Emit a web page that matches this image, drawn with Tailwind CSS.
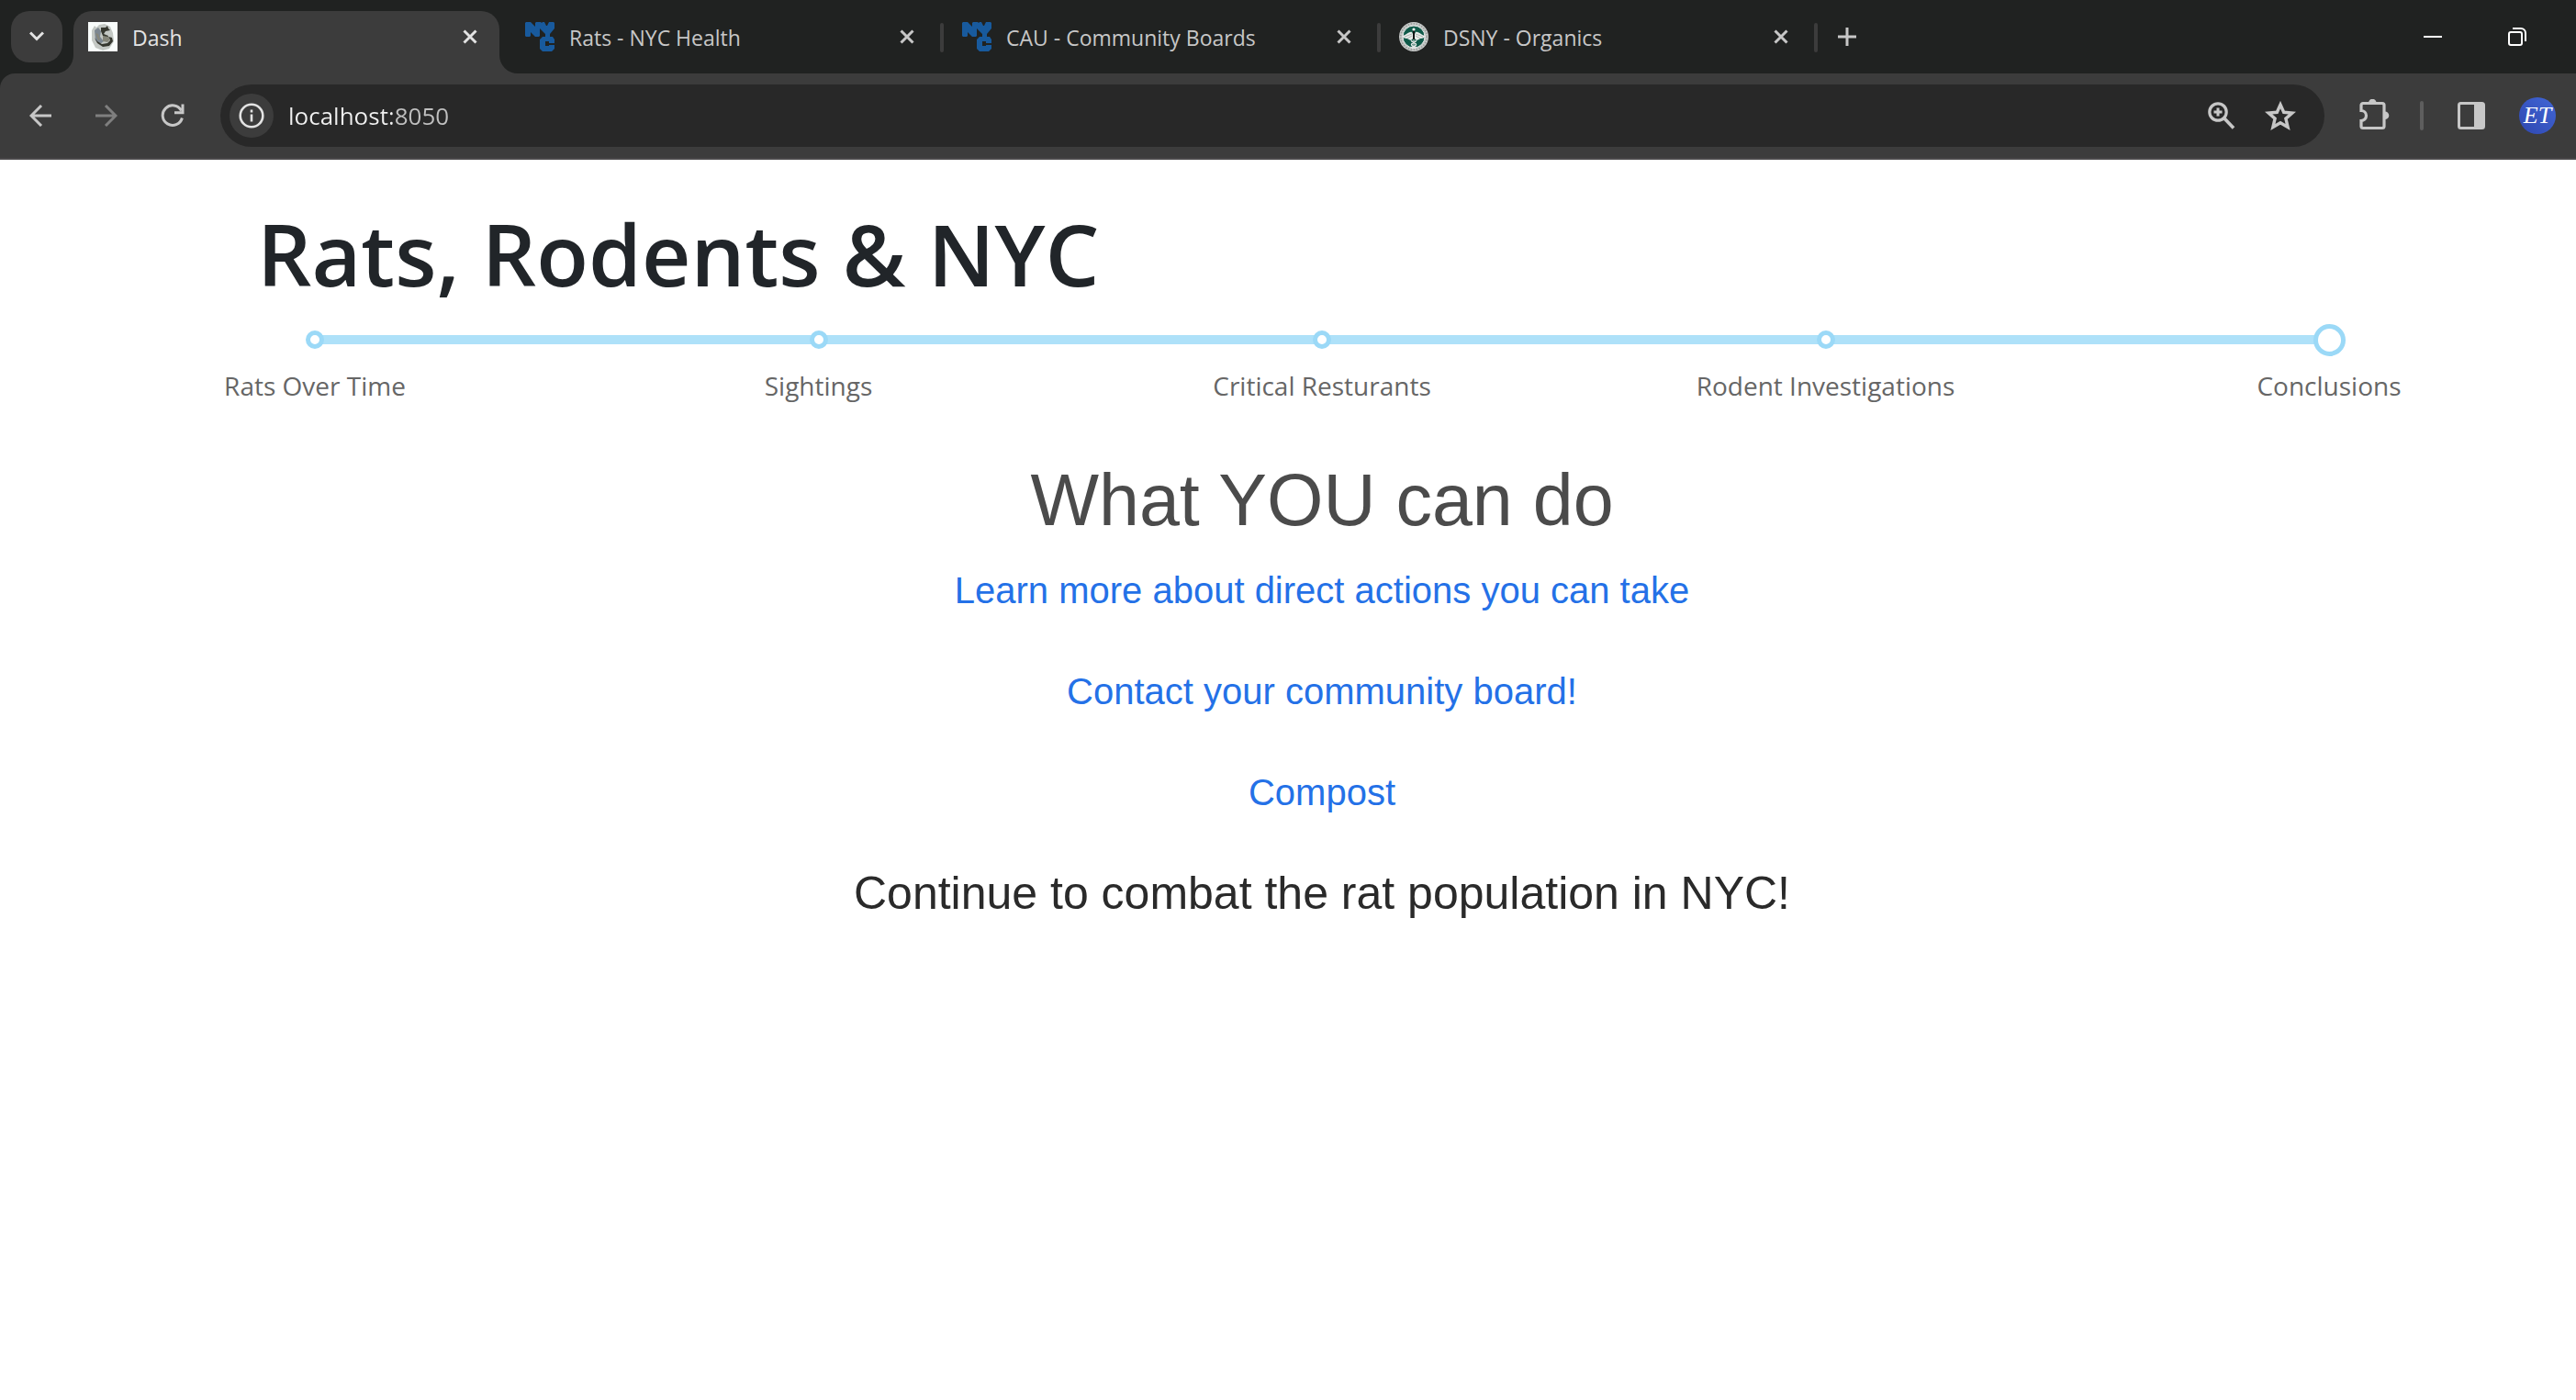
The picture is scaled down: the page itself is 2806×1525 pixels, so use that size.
<!DOCTYPE html>
<html lang="en">
<head>
<meta charset="utf-8">
<meta name="viewport" content="width=device-width, initial-scale=1">
<title>Dash</title>
<script src="https://cdn.jsdelivr.net/npm/@tailwindcss/browser@4"></script>
</head>
<body class="min-h-screen bg-white font-['Open_Sans',sans-serif]">

<svg class="hidden" aria-hidden="true">
  <symbol id="close" viewBox="0 0 16 16"><path d="M1.5 1.5l13 13M14.5 1.5l-13 13" fill="none" stroke="currentColor" stroke-width="3"/></symbol>
  <symbol id="nyc" viewBox="0 0 32 32">
    <path fill="#185a9d" d="M1 0h5l5 5V1l1-1h5l1 1 1-1h2l2 4h1l2-4h5l1 1v6l-5 6v3h3l2 3v4h-6v2h6v4l-3 3H19l-3-3V19l3-3h3v-3l-6-6v8l-1 1h-4l-5-5v4l-1 1H1l-1-1V1z"/>
    <path fill="#202221" d="M22 21h4v2h6v2H26v1h-4z"/>
  </symbol>
</svg>

<header>
  <!-- Tab strip -->
  <div class="flex h-20 bg-[#202221] pt-3">
    <button class="ml-3 flex size-14 items-center justify-center rounded-[20px] bg-[#3c3c3c] text-[#e3e3e3]" aria-label="Search tabs">
      <svg class="h-3 w-4" viewBox="0 0 16 12" fill="none" stroke="currentColor" stroke-width="3"><path d="M1 1.500l7 7 7-7"/></svg>
    </button>

    <div class="relative ml-3 flex h-[68px] w-[464px] rounded-t-[20px] bg-[#3c3c3c] pl-4 text-[#e3e3e3]">
      <svg class="absolute bottom-0 -left-5 size-5" viewBox="0 0 20 20"><path d="M20 0v20H0A20 20 0 0 0 20 0z" fill="#3c3c3c"/></svg>
      <svg class="absolute bottom-0 -right-5 size-5" viewBox="0 0 20 20"><path d="M0 0v20h20A20 20 0 0 1 0 0z" fill="#3c3c3c"/></svg>
      <div class="flex h-14 flex-1 items-center gap-4">
        <svg class="size-8" viewBox="0 0 32 32">
          <path fill="#f8fcfb" d="M0 0h32v32H0z"/>
          <path fill="#c3c8c4" d="M4 9l3-5 2 2 3-3 6-1 6 3 3 7 1 9-5 8-7 2-8-3-4-8z"/>
          <path fill="#7c8791" d="M7 9l4-3 3 4-1 6 4 5-4 3-5-4z"/>
          <path fill="#35372f" d="M14 6h5l2-2 1 3 2 2-5 1-2 3 5 2-1 3-5-3-2-5zM7 17l3 4 5 3 6-1 3-3-2-4 4 1 1 4-4 5-7 1-6-4z"/>
          <path fill="#85867a" d="M16 15l6 1 2 3-3 3-5-1zM8 12l3 1 2 6-2 1z"/>
        </svg>
        <span class="pt-0.5 text-[23px] leading-8">Dash</span>
      </div>
      <button class="flex h-14 w-16 items-center justify-center" aria-label="Close tab"><svg class="size-4"><use href="#close"/></svg></button>
    </div>

    <div class="ml-3 flex h-14 w-[468px] items-center pl-4 text-[#c7c7c7]">
      <div class="flex flex-1 items-center gap-4"><svg class="size-8"><use href="#nyc"/></svg><span class="pt-0.5 text-[23px] leading-8">Rats - NYC Health</span></div>
      <button class="mr-1 flex h-14 w-16 items-center justify-center" aria-label="Close tab"><svg class="size-4"><use href="#close"/></svg></button>
    </div>
    <div class="mt-[13px] mr-1 h-8 w-1 rounded-sm bg-[#3c3c3c]"></div>

    <div class="flex h-14 w-[468px] items-center pl-4 text-[#c7c7c7]">
      <div class="flex flex-1 items-center gap-4"><svg class="size-8"><use href="#nyc"/></svg><span class="pt-0.5 text-[23px] leading-8">CAU - Community Boards</span></div>
      <button class="mr-1 flex h-14 w-16 items-center justify-center" aria-label="Close tab"><svg class="size-4"><use href="#close"/></svg></button>
    </div>
    <div class="mt-[13px] mr-1 h-8 w-1 rounded-sm bg-[#3c3c3c]"></div>

    <div class="flex h-14 w-[468px] items-center pl-4 text-[#c7c7c7]">
      <div class="flex flex-1 items-center gap-4">
        <svg class="size-8" viewBox="0 0 32 32">
          <circle cx="16" cy="16" r="16" fill="#c9cccb"/>
          <circle cx="16" cy="16" r="14.200" fill="none" stroke="#9a9d9b" stroke-width="1.600" stroke-dasharray="1.600 1.400"/>
          <circle cx="16" cy="16" r="12" fill="#0f5a49" stroke="#e4e7e6" stroke-width="1"/>
          <path fill="#e8ebea" d="M3 15c5 0 7-5 11-4l1 2v5l-2 2c-2-1-3-1-4-2-3 0-5-1-6-3zM29 15c-5 0-7-5-11-4l-1 2v5l2 2c2-1 3-1 4-2 3 0 5-1 6-3z"/>
          <path fill="none" stroke="#9fa9a5" stroke-width=".8" d="M6 16l8-3M9 18l5-3M26 16l-8-3M23 18l-5-3"/>
          <path fill="none" stroke="#e8ebea" stroke-width="1.500" d="M13.500 20c0 3 5 2 5 4.500s-4 2-4 4.500M18.500 20c0 3-5 2-5 4.500s4 2 4 4.500"/>
          <path stroke="#101514" stroke-width="2" d="M16 9v10"/>
          <path stroke="#dfe3e1" stroke-width="1" d="M16 19v10"/>
          <circle cx="16" cy="8" r="1.600" fill="#f4f6f5"/>
        </svg>
        <span class="pt-0.5 text-[23px] leading-8">DSNY - Organics</span>
      </div>
      <button class="mr-1 flex h-14 w-16 items-center justify-center" aria-label="Close tab"><svg class="size-4"><use href="#close"/></svg></button>
    </div>
    <div class="mt-[13px] mr-1 h-8 w-1 rounded-sm bg-[#3c3c3c]"></div>

    <button class="flex size-14 items-center justify-center text-[#c7c7c7]" aria-label="New tab">
      <svg class="size-5" viewBox="0 0 20 20" stroke="currentColor" stroke-width="3"><path d="M10 0v20M0 10h20"/></svg>
    </button>

    <div class="mr-[18px] ml-auto flex h-14 text-white">
      <button class="flex w-[92px] items-center justify-center" aria-label="Minimize"><svg class="size-5" viewBox="0 0 20 20" stroke="currentColor" stroke-width="2"><path d="M0 10h20"/></svg></button>
      <button class="flex w-[92px] items-center justify-center" aria-label="Restore"><svg class="size-5" viewBox="0 0 20 20" fill="none" stroke="currentColor" stroke-width="2"><rect x="1" y="5" width="14" height="14" rx="2"/><path d="M5 1h9a5 5 0 0 1 5 5v9"/></svg></button>
    </div>
  </div>

  <!-- Toolbar -->
  <div class="bg-[#202221]">
    <div class="flex items-center rounded-tl-[16px] border-b-2 border-[#4a484a] bg-[#3c3c3c] py-3 pr-[6px] pl-2 text-[#c7c7c7]">
      <button class="flex h-14 w-[72px] items-center justify-center" aria-label="Back"><svg class="size-6" viewBox="0 0 24 24" fill="none" stroke="currentColor" stroke-width="3"><path d="M24 12H2.500M13 1L2 12l11 11"/></svg></button>
      <button class="flex h-14 w-[72px] items-center justify-center text-[#7f7f7f]" aria-label="Forward"><svg class="size-6" viewBox="0 0 24 24" fill="none" stroke="currentColor" stroke-width="3"><path d="M0 12h21.500M11 1l11 11-11 11"/></svg></button>
      <button class="flex h-14 w-[72px] items-center justify-center" aria-label="Reload"><svg class="size-[26px]" viewBox="0 0 26 26" fill="none" stroke="currentColor" stroke-width="3"><path d="M23.400 15.500A10.800 10.800 0 1 1 22.500 7.500M24 .5v9.200h-9"/></svg></button>

      <div class="ml-4 flex h-[68px] flex-1 items-center rounded-full bg-[#282828] pr-4 pl-[10px]">
        <button class="flex size-12 items-center justify-center rounded-full bg-[#3c3c3c] text-[#e3e3e3]" aria-label="Site information">
          <svg class="size-7" viewBox="0 0 28 28" fill="none" stroke="currentColor" stroke-width="2.600"><circle cx="14" cy="14" r="12.300"/><path d="M14 12.500v8M14 7.500v3"/></svg>
        </button>
        <input type="text" value="localhost:8050" aria-label="Address and search bar" class="ml-4 h-12 min-w-0 flex-1 bg-[linear-gradient(90deg,#f0f0f0_113px,#c0c0c0_113px)] bg-clip-text text-[26px] text-transparent outline-none">
        <button class="flex h-14 w-16 items-center justify-center" aria-label="Zoom">
          <svg class="size-[30px]" viewBox="0 0 30 30" fill="none" stroke="currentColor" stroke-width="3.200"><circle cx="11" cy="11" r="9.200"/><path d="M17.500 17.500L28 28.500" stroke-width="3.600"/><path d="M11 6.500v9M6.500 11h9" stroke-width="3"/></svg>
        </button>
        <button class="flex h-14 w-16 items-center justify-center" aria-label="Bookmark this tab">
          <svg class="h-8 w-[34px]" viewBox="0 0 34 32" fill="none" stroke="currentColor" stroke-width="3.400"><path d="M17 4l3.700 8.300 9.200.8-7 6.100 2.200 9.300L17 23.700l-8.100 4.800 2.200-9.300-7-6.100 9.200-.8z"/></svg>
        </button>
      </div>

      <button class="ml-[18px] flex h-14 w-[72px] items-center justify-center" aria-label="Extensions">
        <svg class="size-9" viewBox="0 0 36 36"><path d="M4 12.500V6.500a2 2 0 0 1 2-2h21a2 2 0 0 1 2 2v23a2 2 0 0 1-2 2H6a2 2 0 0 1-2-2v-6a5.500 5.500 0 0 0 0-11z" fill="none" stroke="currentColor" stroke-width="3.200"/><path d="M12 4a4.300 4.300 0 0 1 8.600 0zM30 13.500a4.300 4.300 0 0 1 0 8.600z" fill="currentColor"/></svg>
      </button>
      <div class="mr-4 ml-[14px] h-8 w-1 rounded-sm bg-[#5e5e5e]"></div>
      <button class="flex h-14 w-[72px] items-center justify-center" aria-label="Side panel">
        <svg class="size-[30px]" viewBox="0 0 30 30"><rect x="1.500" y="1.500" width="27" height="27" rx="2" fill="none" stroke="currentColor" stroke-width="3"/><path d="M18 1h10v28H18z" fill="currentColor"/></svg>
      </button>
      <button class="flex h-14 w-[72px] items-center justify-center" aria-label="Profile">
        <span class="flex size-10 items-center justify-center overflow-hidden rounded-full bg-linear-to-tr from-[#2f47b0] to-[#4166d6] font-['Liberation_Serif',serif] text-[26px] leading-10 text-white italic">ET</span>
      </button>
    </div>
  </div>
</header>

<main>
  <h1 class="mt-[42px] pl-[280px] text-[93px] leading-[120px] font-semibold text-[#212529]">Rats, Rodents &amp; NYC</h1>

  <section class="mt-4 pr-[269px] pl-[343px]">
    <!-- Step slider: rail, stops and handle share one grid cell -->
    <div class="grid h-9 items-center">
      <div class="col-start-1 row-start-1 h-[10px] rounded-md bg-[#aee1f9]"></div>
      <div class="col-start-1 row-start-1 -mx-[10px] flex justify-between">
        <span class="size-5 rounded-full border-5 border-[#9bd9f7] bg-white"></span>
        <span class="size-5 rounded-full border-5 border-[#9bd9f7] bg-white"></span>
        <span class="size-5 rounded-full border-5 border-[#9bd9f7] bg-white"></span>
        <span class="size-5 rounded-full border-5 border-[#9bd9f7] bg-white"></span>
        <span class="size-5 rounded-full border-5 border-[#9bd9f7] bg-white"></span>
      </div>
      <input type="range" min="0" max="4" step="1" value="4" aria-label="Section" class="col-start-1 row-start-1 -mx-[18px] h-9 appearance-none bg-transparent [&::-webkit-slider-thumb]:size-[35px] [&::-webkit-slider-thumb]:appearance-none [&::-webkit-slider-thumb]:rounded-full [&::-webkit-slider-thumb]:border-5 [&::-webkit-slider-thumb]:border-solid [&::-webkit-slider-thumb]:border-[#9bd9f7] [&::-webkit-slider-thumb]:bg-white">
    </div>
    <div class="mt-3 flex justify-between text-[28px] leading-10 whitespace-nowrap text-[#666]">
      <span class="flex w-0 justify-center">Rats Over Time</span>
      <span class="flex w-0 justify-center">Sightings</span>
      <span class="flex w-0 justify-center">Critical Resturants</span>
      <span class="flex w-0 justify-center">Rodent Investigations</span>
      <span class="flex w-0 justify-center">Conclusions</span>
    </div>

    <div class="mt-[57px] flex flex-col items-center font-['Liberation_Sans',Arial,sans-serif]">
      <h2 class="text-[79px] leading-[96px] text-[#4b4b4b]">What YOU can do</h2>
      <div class="mt-5 flex flex-col items-center gap-[50px] text-[40px] leading-[60px] text-[#2471e7]">
        <a href="#actions">Learn more about direct actions you can take</a>
        <a href="#boards">Contact your community board!</a>
        <a href="#compost">Compost</a>
        <p class="text-[50px] leading-[60px] text-[#2a2a2a]">Continue to combat the rat population in NYC!</p>
      </div>
    </div>
  </section>
</main>
</body>
</html>
